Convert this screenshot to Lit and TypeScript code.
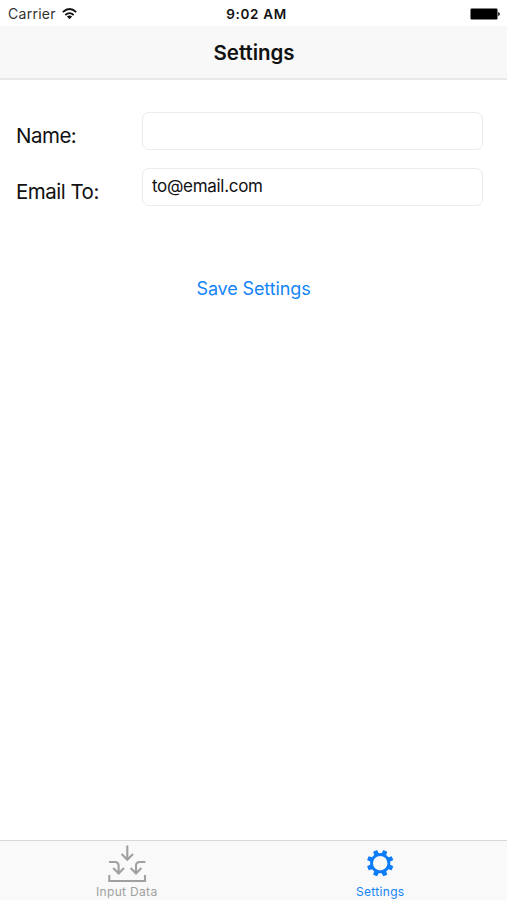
import { LitElement, html, css, svg } from "lit";
import { customElement } from "lit/decorators.js";

const gearTeeth = Array.from({ length: 8 }, (_, i) => 22.5 + i * 45);

@customElement("app-root")
export class AppRoot extends LitElement {
  static styles = css`
    :host {
      display: flex;
      flex-direction: column;
      height: 100vh;
      overflow: hidden;
      background: #fff;
      color: #111;
      font-family: Inter, "Liberation Sans", sans-serif;
      white-space: nowrap;
    }
    svg { display: block; }
    .status {
      display: grid;
      grid-template-columns: 1fr auto 1fr;
      align-items: center;
      height: 26px;
      box-sizing: border-box;
      padding: 1px 7px 0 8px;
      font-size: 14px;
      line-height: 26px;
    }
    .carrier { display: flex; align-items: center; gap: 6px; color: #333; letter-spacing: 0.28px; }
    .time { font-size: 13.5px; font-weight: 600; letter-spacing: 0.65px; padding-left: 5px; }
    .battery { justify-self: end; }
    .nav {
      height: 54px;
      box-sizing: border-box;
      padding-left: 1px;
      background: #f8f8f8;
      border-bottom: 2px solid #e9e9e9;
      text-align: center;
      font-size: 20.5px;
      font-weight: 600;
      line-height: 53px;
      letter-spacing: -0.05px;
    }
    .form {
      flex: 1;
      display: flex;
      flex-direction: column;
      padding: 32px 24px 0 16px;
    }
    .row { display: flex; height: 38px; margin-bottom: 18px; }
    .label { width: 126px; font-size: 20.5px; line-height: 48px; letter-spacing: -0.5px; }
    .field {
      flex: 1;
      box-sizing: border-box;
      border: 1px solid #ebebeb;
      border-radius: 7px;
      padding-left: 9px;
      font-size: 17px;
      line-height: 35px;
      letter-spacing: -0.3px;
    }
    .save {
      align-self: center;
      margin: 53px 0 0 8px;
      padding: 0;
      border: 0;
      background: none;
      color: #1484f8;
      font: 18px/24px Inter, "Liberation Sans", sans-serif;
      letter-spacing: -0.12px;
    }
    .tabs {
      display: flex;
      height: 60px;
      box-sizing: border-box;
      background: #f9f9f9;
      border-top: 1px solid #d8d8d8;
    }
    .tab {
      flex: 1;
      display: flex;
      flex-direction: column;
      align-items: center;
      padding-top: 3px;
      color: #a0a0a0;
      font-size: 12px;
      line-height: 16px;
      letter-spacing: 0.33px;
    }
    .active { color: #1484f8; }
  `;

  render() {
    return html`
      <div class="status">
        <div class="carrier">
          <span>Carrier</span>
          <svg width="15" height="13" viewBox="0 0 15 13" fill="none" stroke="#111" stroke-width="1.8">
            <path d="M.8 4.1Q7.5-2 14.2 4.1M3.3 7Q7.5 3.2 11.7 7" />
            <path d="M4.9 8.6Q7.5 6.6 10.1 8.6L7.5 11.3Z" fill="#111" stroke="none" />
          </svg>
        </div>
        <div class="time">9:02 AM</div>
        <svg class="battery" width="30" height="12" viewBox="0 0 30 12">
          <rect x=".5" y=".5" width="27" height="11" rx="1.2" />
          <path d="M28 4Q30 4.5 30 6T28 8Z" fill="#333" />
        </svg>
      </div>
      <div class="nav">Settings</div>
      <div class="form">
        <div class="row"><span class="label">Name:</span><div class="field"></div></div>
        <div class="row"><span class="label">Email To:</span><div class="field">to@email.com</div></div>
        <button class="save">Save Settings</button>
      </div>
      <div class="tabs">
        <div class="tab">
          <svg width="40" height="40" viewBox="0 0 40 40" fill="none" stroke="#a0a0a0" stroke-width="2.1">
            <path d="M20.3 1.5V15.5M14.6 10L20.3 15.7L26 10" />
            <path d="M2 18H7.8Q11.6 18 11.6 21.8V29M6.2 24L11.6 29.4L17 24" />
            <path d="M38.4 18H32.8Q29 18 29 21.8V29M23.6 24L29 29.4L34.4 24" />
            <path d="M2.3 31V37H38V31" />
          </svg>
          <span>Input Data</span>
        </div>
        <div class="tab active">
          <svg width="40" height="40" viewBox="0 0 40 40">
            <circle cx="20.2" cy="19.2" r="8.7" fill="none" stroke="#0c7cf8" stroke-width="2.9" />
            ${gearTeeth.map(
              (a) => svg`<path d="M17.7 10.2L18.1 5.9H22.3L22.7 10.2Z" fill="#0c7cf8" transform="rotate(${a} 20.2 19.2)" />`
            )}
          </svg>
          <span>Settings</span>
        </div>
      </div>
    `;
  }
}
